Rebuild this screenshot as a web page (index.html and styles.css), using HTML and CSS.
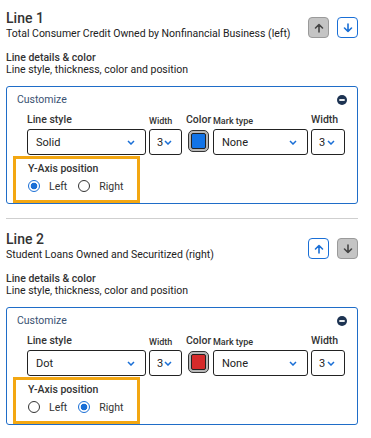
FILE: index.html
```html
<!DOCTYPE html>
<html lang="en">
<head>
    <meta charset="utf-8">
    <title>Line settings</title>
    <link rel="stylesheet" href="styles.css">
</head>
<body>
    <section class="line">
        <div class="line-head">
            <div class="line-title">
                <h2>Line 1</h2>
                <p class="series">Total Consumer Credit Owned by Nonfinancial Business (left)</p>
            </div>
            <div class="move">
                <button class="move-btn off" aria-label="Move up">
                    <svg width="10" height="10" viewBox="0 0 10 10"><path d="M5 9V1.5M1.5 5L5 1.5 8.5 5" /></svg>
                </button>
                <button class="move-btn on" aria-label="Move down">
                    <svg width="10" height="10" viewBox="0 0 10 10"><path d="M5 1v7.5M1.5 5L5 8.5 8.5 5" /></svg>
                </button>
            </div>
        </div>

        <div class="details">
            <h3>Line details &amp; color</h3>
            <p>Line style, thickness, color and position</p>
        </div>

        <div class="customize">
            <div class="cust-head">
                <span>Customize</span>
                <svg class="collapse" width="10" height="10" viewBox="0 0 10 10"><circle cx="5" cy="5" r="5" /><rect x="2.3" y="4.1" width="5.4" height="1.8" fill="#fff" /></svg>
            </div>
            <div class="fields">
                <div class="field f-style">
                    <label>Line style</label>
                    <div class="select">Solid<svg class="chev" width="8" height="5" viewBox="0 0 8 5"><path d="M1 1l3 3 3-3" /></svg></div>
                </div>
                <div class="field f-width">
                    <label class="small">Width</label>
                    <div class="select">3<svg class="chev" width="8" height="5" viewBox="0 0 8 5"><path d="M1 1l3 3 3-3" /></svg></div>
                </div>
                <div class="field f-color">
                    <label>Color</label>
                    <div class="swatch"><span class="blue"></span></div>
                </div>
                <div class="field f-mark">
                    <label class="small">Mark type</label>
                    <div class="select">None<svg class="chev" width="8" height="5" viewBox="0 0 8 5"><path d="M1 1l3 3 3-3" /></svg></div>
                </div>
                <div class="field f-width2">
                    <label>Width</label>
                    <div class="select">3<svg class="chev" width="8" height="5" viewBox="0 0 8 5"><path d="M1 1l3 3 3-3" /></svg></div>
                </div>
            </div>
            <div class="yaxis">
                <div class="yaxis-title">Y-Axis position</div>
                <div class="radios">
                    <span class="radio checked"></span><span class="radio-label">Left</span>
                    <span class="radio"></span><span class="radio-label">Right</span>
                </div>
            </div>
        </div>
    </section>

    <hr class="sep">

    <section class="line">
        <div class="line-head">
            <div class="line-title">
                <h2>Line 2</h2>
                <p class="series">Student Loans Owned and Securitized (right)</p>
            </div>
            <div class="move">
                <button class="move-btn on" aria-label="Move up">
                    <svg width="10" height="10" viewBox="0 0 10 10"><path d="M5 9V1.5M1.5 5L5 1.5 8.5 5" /></svg>
                </button>
                <button class="move-btn off" aria-label="Move down">
                    <svg width="10" height="10" viewBox="0 0 10 10"><path d="M5 1v7.5M1.5 5L5 8.5 8.5 5" /></svg>
                </button>
            </div>
        </div>

        <div class="details">
            <h3>Line details &amp; color</h3>
            <p>Line style, thickness, color and position</p>
        </div>

        <div class="customize">
            <div class="cust-head">
                <span>Customize</span>
                <svg class="collapse" width="10" height="10" viewBox="0 0 10 10"><circle cx="5" cy="5" r="5" /><rect x="2.3" y="4.1" width="5.4" height="1.8" fill="#fff" /></svg>
            </div>
            <div class="fields">
                <div class="field f-style">
                    <label>Line style</label>
                    <div class="select">Dot<svg class="chev" width="8" height="5" viewBox="0 0 8 5"><path d="M1 1l3 3 3-3" /></svg></div>
                </div>
                <div class="field f-width">
                    <label class="small">Width</label>
                    <div class="select">3<svg class="chev" width="8" height="5" viewBox="0 0 8 5"><path d="M1 1l3 3 3-3" /></svg></div>
                </div>
                <div class="field f-color">
                    <label>Color</label>
                    <div class="swatch"><span class="red"></span></div>
                </div>
                <div class="field f-mark">
                    <label class="small">Mark type</label>
                    <div class="select">None<svg class="chev" width="8" height="5" viewBox="0 0 8 5"><path d="M1 1l3 3 3-3" /></svg></div>
                </div>
                <div class="field f-width2">
                    <label>Width</label>
                    <div class="select">3<svg class="chev" width="8" height="5" viewBox="0 0 8 5"><path d="M1 1l3 3 3-3" /></svg></div>
                </div>
            </div>
            <div class="yaxis">
                <div class="yaxis-title">Y-Axis position</div>
                <div class="radios">
                    <span class="radio"></span><span class="radio-label">Left</span>
                    <span class="radio checked"></span><span class="radio-label">Right</span>
                </div>
            </div>
        </div>
    </section>
</body>
</html>
```

FILE: styles.css
```css
* {
    margin: 0;
    padding: 0;
    box-sizing: border-box;
}

body {
    font-family: Roboto, "Liberation Sans", sans-serif;
    font-size: 10.5px;
    color: #222;
    background: #fff;
    width: 371px;
    padding: 0 13px 0 6px;
}

.line {
    padding-top: 9px;
}

.line-head {
    display: flex;
    justify-content: space-between;
    align-items: flex-end;
}

.line-title h2 {
    font-size: 14px;
    font-weight: 500;
    line-height: 18px;
    color: #333;
}

.series {
    font-size: 10.5px;
    line-height: 14px;
    color: #222;
}

.move {
    display: flex;
    gap: 8px;
    margin-bottom: 3px;
}

.move-btn {
    width: 21px;
    height: 21px;
    border-radius: 4px;
    display: flex;
    align-items: center;
    justify-content: center;
    background: #fff;
}

.move-btn svg path {
    fill: none;
    stroke-width: 1.6;
    stroke-linecap: round;
    stroke-linejoin: round;
}

.move-btn.on {
    border: 1px solid #1a6fd6;
}

.move-btn.on svg path {
    stroke: #1a6fd6;
}

.move-btn.off {
    background: #c4c4c4;
    border: 1px solid #9a9a9a;
}

.move-btn.off svg path {
    stroke: #444;
}

.details {
    margin-top: 11px;
}

.details h3 {
    font-size: 10.5px;
    font-weight: 500;
    line-height: 12px;
    color: #333;
}

.details p {
    line-height: 12px;
}

.customize {
    margin-top: 10px;
    border: 1px solid #1f6dc8;
    border-radius: 3px;
}

.cust-head {
    display: flex;
    justify-content: space-between;
    align-items: center;
    padding: 5px 10px 0 10px;
    line-height: 16px;
    color: #3a5272;
}

.collapse {
    fill: #1d3352;
}

.fields {
    display: flex;
    padding-left: 20px;
    margin-top: 2px;
}

.field {
    display: flex;
    flex-direction: column;
}

.field label {
    height: 16px;
    display: flex;
    align-items: flex-end;
    font-weight: 500;
    color: #333;
    margin-bottom: 3px;
    white-space: nowrap;
}

.field label.small {
    font-size: 9px;
}

.f-style { width: 119px; }
.f-width { width: 33px; margin-left: 3px; }
.f-color { width: 27px; margin-left: 4px; }
.f-mark { width: 95px; }
.f-width2 { width: 34px; margin-left: 3px; }

.select {
    height: 26px;
    border: 1px solid #222;
    border-radius: 3px;
    display: flex;
    align-items: center;
    justify-content: space-between;
    padding: 0 10px 0 8px;
    font-size: 11px;
    color: #222;
}

.f-width .select,
.f-width2 .select {
    padding: 0 9px 0 7px;
}

.chev path {
    fill: none;
    stroke: #1a6fd6;
    stroke-width: 1.5;
}

.swatch {
    width: 21px;
    height: 22px;
    margin-top: 1px;
    margin-left: 2px;
    border: 1px solid #333;
    border-radius: 5px;
    background: #b8b8b8;
    padding: 2px;
}

.swatch span {
    display: block;
    width: 100%;
    height: 100%;
    border: 1px solid #222;
    border-radius: 2px;
}

.swatch .blue { background: #1274e8; }
.swatch .red { background: #d62b2b; }

.yaxis {
    width: 127px;
    margin: 1px 0 0 6px;
    border: 3px solid #f3a712;
    padding: 3px 0 4px 12px;
}

.yaxis-title {
    line-height: 14px;
    font-weight: 500;
    color: #333;
}

.radios {
    display: flex;
    align-items: center;
    height: 20px;
}

.radio {
    width: 12px;
    height: 12px;
    border: 1px solid #333;
    border-radius: 50%;
    background: #fff;
}

.radio.checked {
    border: 1.5px solid #1a6fd6;
    background: radial-gradient(circle, #1a6fd6 0 3.2px, #fff 3.6px);
}

.radio-label {
    margin: 0 11px 0 9px;
    color: #333;
}

.sep {
    border: none;
    border-top: 1px solid #cfcfcf;
    margin-top: 14px;
    margin-right: 0;
}

.sep + .line {
    padding-top: 11px;
}
```
